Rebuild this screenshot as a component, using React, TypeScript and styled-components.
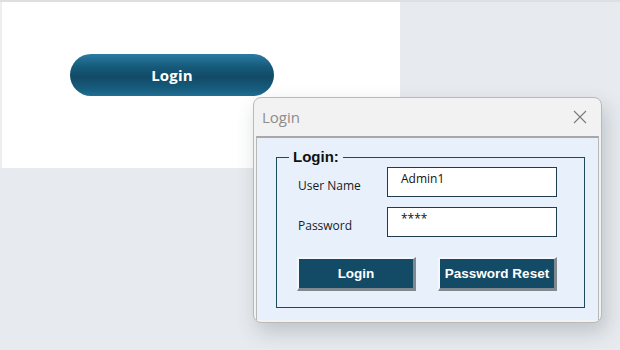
import styled, { createGlobalStyle } from 'styled-components'

const GlobalStyle = createGlobalStyle`
  html, body {
    margin: 0;
    padding: 0;
    background: #e7ebef;
    font-family: "Open Sans", "Liberation Sans", sans-serif;
  }
`

const Page = styled.div`
  position: relative;
  width: 620px;
  height: 350px;
  overflow: hidden;
  border-top: 2px solid #dedfe0;
  box-sizing: border-box;
`

const Sheet = styled.div`
  width: 400px;
  height: 166px;
  background: #ffffff;
  border-left: 2px solid #eceef0;
  display: flex;
  align-items: flex-start;
  padding: 52px 0 0 68px;
  box-sizing: border-box;
`

const PillButton = styled.button`
  width: 204px;
  height: 42px;
  border: none;
  border-radius: 21px;
  background: linear-gradient(
    to bottom,
    #2a7ca3 0%,
    #165a7b 30%,
    #124a66 55%,
    #175e80 85%,
    #206f94 100%
  );
  color: #ffffff;
  font-family: "Open Sans", "Liberation Sans", sans-serif;
  font-weight: 700;
  font-size: 15px;
  letter-spacing: 0.2px;
  padding: 0;
  cursor: pointer;
`

const Window = styled.div`
  position: absolute;
  left: 253px;
  top: 95px;
  width: 349px;
  height: 226px;
  background: #f2f2f2;
  border: 1px solid #b9b9b9;
  border-radius: 8px;
  box-shadow: 4px 9px 20px rgba(60, 70, 80, 0.24);
  display: flex;
  flex-direction: column;
  overflow: hidden;
  box-sizing: border-box;
`

const TitleBar = styled.div`
  height: 38px;
  display: flex;
  align-items: center;
  justify-content: space-between;
  padding: 0 14px 0 8px;
  flex-shrink: 0;
`

const Title = styled.span`
  font-family: "Open Sans", "Liberation Sans", sans-serif;
  font-size: 15px;
  color: #8c8c8c;
`

const CloseIcon = styled.svg`
  width: 14px;
  height: 14px;
`

const Body = styled.div`
  flex: 1;
  margin: 0 2px 2px 2px;
  background: #e8f1fb;
  border-top: 2px solid #a8a8a8;
  border-left: 1px solid #b8b8b8;
  border-right: 1px solid #b8b8b8;
  padding: 12px 13px 12px 19px;
  box-sizing: border-box;
  display: flex;
`

const Group = styled.fieldset`
  flex: 1;
  margin: 0;
  border: 1px solid #1b4a5e;
  padding: 0 27px 0 20px;
  display: flex;
  flex-direction: column;
  min-width: 0;
`

const Legend = styled.legend`
  font-family: "Liberation Sans", Arial, sans-serif;
  font-weight: 700;
  font-size: 15px;
  color: #111;
  padding: 0 4px;
  margin-left: -8px;
  line-height: 14px;
`

const Row = styled.div<{ $top: number }>`
  display: flex;
  align-items: center;
  justify-content: space-between;
  margin-top: ${(p) => p.$top}px;
`

const Label = styled.label`
  font-family: "Open Sans", "Liberation Sans", sans-serif;
  font-size: 12px;
  color: #1a1a1a;
  padding-top: 6px;
  padding-left: 1px;
`

const Field = styled.div`
  width: 170px;
  height: 30px;
  background: #ffffff;
  border: 1px solid #1d3c4c;
  box-sizing: border-box;
  padding: 3px 13px 0;
  font-family: "Open Sans", "Liberation Sans", sans-serif;
  font-size: 12px;
  color: #111;
  line-height: 16px;
`

const Buttons = styled.div`
  display: flex;
  justify-content: space-between;
  margin-top: 20px;
`

const FormButton = styled.button`
  width: 119px;
  height: 34px;
  background: #134a66;
  color: #ffffff;
  font-family: "Liberation Sans", Arial, sans-serif;
  font-weight: 700;
  font-size: 13.5px;
  border-style: solid;
  border-width: 2px 3px 3px 2px;
  border-color: #f4f8fc #7f8a90 #7f8a90 #f4f8fc;
  padding: 0;
  cursor: pointer;
`

export default function App() {
  return (
    <>
      <GlobalStyle />
      <Page>
        <Sheet>
          <PillButton>Login</PillButton>
        </Sheet>
        <Window>
          <TitleBar>
            <Title>Login</Title>
            <CloseIcon viewBox="0 0 14 14">
              <path d="M1 1 L13 13 M13 1 L1 13" stroke="#7a7a7a" strokeWidth="1.1" fill="none" />
            </CloseIcon>
          </TitleBar>
          <Body>
            <Group>
              <Legend>Login:</Legend>
              <Row $top={3}>
                <Label>User Name</Label>
                <Field>Admin1</Field>
              </Row>
              <Row $top={10}>
                <Label>Password</Label>
                <Field>****</Field>
              </Row>
              <Buttons>
                <FormButton>Login</FormButton>
                <FormButton>Password Reset</FormButton>
              </Buttons>
            </Group>
          </Body>
        </Window>
      </Page>
    </>
  )
}
